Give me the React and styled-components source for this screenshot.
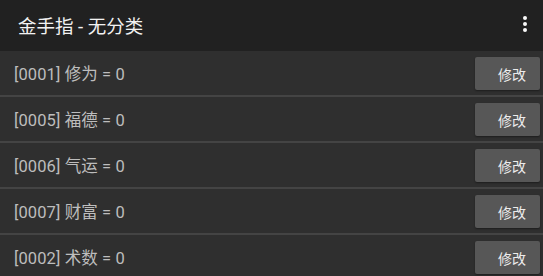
import React from 'react';
import styled, { createGlobalStyle } from 'styled-components';

const GlobalStyle = createGlobalStyle`
  html, body {
    margin: 0;
    padding: 0;
    background: #2f2f2f;
    overflow: hidden;
  }
  body {
    font-family: Roboto, "Noto Sans CJK SC", sans-serif;
  }
`;

const Page = styled.div`
  width: 543px;
  height: 276px;
  display: flex;
  flex-direction: column;
  background: #2f2f2f;
  overflow: hidden;
`;

const Toolbar = styled.header`
  flex: 0 0 51px;
  display: flex;
  align-items: center;
  justify-content: space-between;
  padding: 0 16px 0 18px;
  background: #212121;
`;

const Title = styled.h1`
  margin: 0 0 2px;
  font-size: 18.5px;
  font-weight: 400;
  color: #f2f2f2;
`;

const MenuDots = styled.div`
  display: flex;
  flex-direction: column;
  gap: 2px;
  margin-bottom: 3px;

  span {
    width: 4px;
    height: 4px;
    border-radius: 50%;
    background: #fafafa;
  }
`;

const List = styled.ul`
  margin: 0;
  padding: 0;
  list-style: none;
`;

const Row = styled.li`
  height: 44px;
  display: flex;
  align-items: center;
  justify-content: space-between;
  padding: 0 3px 0 14px;
  border-bottom: 2px solid #444;
  background: #2f2f2f;
`;

const Label = styled.span`
  font-size: 16.5px;
  color: #bdbdbd;
  letter-spacing: 0.1px;
`;

const EditButton = styled.button`
  width: 65px;
  height: 33px;
  margin-top: 1px;
  padding: 0 0 0 9px;
  border: none;
  border-radius: 2px;
  background: #575757;
  color: #ececec;
  font-family: Roboto, "Noto Sans CJK SC", sans-serif;
  font-size: 14px;
  box-shadow: 0 1px 2px rgba(0, 0, 0, 0.4);
`;

const cheats = [
  { id: '0001', name: '修为', value: 0 },
  { id: '0005', name: '福德', value: 0 },
  { id: '0006', name: '气运', value: 0 },
  { id: '0007', name: '财富', value: 0 },
  { id: '0002', name: '术数', value: 0 },
];

const App = () => (
  <Page>
    <GlobalStyle />
    <Toolbar>
      <Title>金手指 - 无分类</Title>
      <MenuDots>
        <span />
        <span />
        <span />
      </MenuDots>
    </Toolbar>
    <List>
      {cheats.map((c) => (
        <Row key={c.id}>
          <Label>[{c.id}] {c.name} = {c.value}</Label>
          <EditButton>修改</EditButton>
        </Row>
      ))}
    </List>
  </Page>
);

export default App;
